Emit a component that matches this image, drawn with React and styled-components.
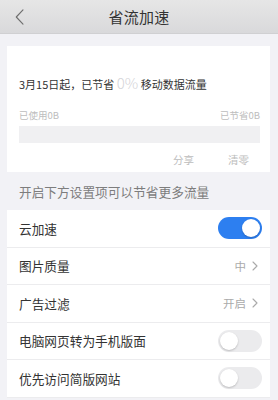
import React, { useState } from 'react';
import styled, { createGlobalStyle } from 'styled-components';

const GlobalStyle = createGlobalStyle`
    body {
        margin: 0;
        background: #f2f2f6;
        font-family: "Noto Sans CJK SC", "Noto Sans", sans-serif;
    }
`;

function Chevron({ color = '#aaa', size = 10, left }) {
    return (
        <svg width={size * 0.6} height={size} viewBox="0 0 6 10">
            <path
                d={left ? 'M5 0.5 L0.8 5 L5 9.5' : 'M1 1 L5 5 L1 9'}
                fill="none"
                stroke={color}
                strokeWidth={left ? 0.7 : 1.1}
                strokeLinecap="round"
                strokeLinejoin="round"
            />
        </svg>
    );
}

function App() {
    const [cloud, setCloud] = useState(true);
    const [mobile, setMobile] = useState(false);
    const [simple, setSimple] = useState(false);

    return (
        <Page>
            <GlobalStyle />
            <Header>
                <BackButton>
                    <Chevron left color="#6e6e6e" size={16} />
                </BackButton>
                <Title>省流加速</Title>
            </Header>

            <Card>
                <Summary>
                    3月15日起，已节省 <Percent>0%</Percent> 移动数据流量
                </Summary>
                <UsageLabels>
                    <span>已使用0B</span>
                    <span>已节省0B</span>
                </UsageLabels>
                <Bar />
                <Actions>
                    <Action>分享</Action>
                    <Action>清零</Action>
                </Actions>
            </Card>

            <SectionTitle>开启下方设置项可以节省更多流量</SectionTitle>

            <List>
                <Row>
                    <Label>云加速</Label>
                    <Toggle $on={cloud} onClick={() => setCloud(!cloud)} />
                </Row>
                <Row>
                    <Label>图片质量</Label>
                    <Value>中 <Chevron /></Value>
                </Row>
                <Row>
                    <Label>广告过滤</Label>
                    <Value>开启 <Chevron /></Value>
                </Row>
                <Row>
                    <Label>电脑网页转为手机版面</Label>
                    <Toggle $on={mobile} onClick={() => setMobile(!mobile)} />
                </Row>
                <Row>
                    <Label>优先访问简版网站</Label>
                    <Toggle $on={simple} onClick={() => setSimple(!simple)} />
                </Row>
            </List>
        </Page>
    );
}

const Page = styled.div`
    width: 278px;
    height: 400px;
    overflow: hidden;
    background: #f2f2f6;
`;

const Header = styled.div`
    height: 34px;
    display: flex;
    align-items: center;
    justify-content: center;
    position: relative;
    background: linear-gradient(#e6e6e6, #d9d9db);
    border-bottom: 1px solid #d0d0d2;
    box-sizing: border-box;
`;

const BackButton = styled.div`
    position: absolute;
    left: 15px;
    top: 9px;
    display: flex;
`;

const Title = styled.div`
    font-size: 15px;
    color: #333;
    letter-spacing: 0.3px;
`;

const Card = styled.div`
    margin: 12px 8px 0 7px;
    background: #fff;
    padding: 28px 10px 6px 12px;
    height: 126px;
    box-sizing: border-box;
`;

const Summary = styled.div`
    font-size: 11px;
    line-height: 18px;
    color: #333;
    white-space: nowrap;
`;

const Percent = styled.span`
    font-size: 15px;
    color: #d4d4d8;
    font-weight: 300;
`;

const UsageLabels = styled.div`
    margin-top: 15px;
    display: flex;
    justify-content: space-between;
    font-size: 9.5px;
    line-height: 14px;
    color: #bdbdbd;
`;

const Bar = styled.div`
    margin-top: 4px;
    height: 17px;
    background: #f0f0f2;
`;

const Actions = styled.div`
    margin-top: 10px;
    display: flex;
    justify-content: flex-end;
    gap: 34px;
    padding-right: 11px;
    font-size: 10.5px;
    line-height: 14px;
    color: #bcbcbc;
`;

const Action = styled.span``;

const SectionTitle = styled.div`
    margin: 11px 0 9px 19px;
    font-size: 12.7px;
    line-height: 18px;
    color: #7d7d7d;
`;

const List = styled.div`
    margin: 0 8px 0 7px;
    background: #fff;
`;

const Row = styled.div`
    height: 37.5px;
    display: flex;
    align-items: center;
    justify-content: space-between;
    padding: 0 8px 0 12px;
    box-sizing: border-box;
    border-bottom: 1px solid #ececee;
`;

const Label = styled.span`
    font-size: 12.7px;
    color: #333;
`;

const Value = styled.span`
    display: flex;
    align-items: center;
    gap: 6px;
    padding-right: 4px;
    font-size: 11.5px;
    color: #aaa;
`;

const Toggle = styled.div`
    width: 44px;
    height: 22px;
    border-radius: 11px;
    background: ${p => (p.$on ? '#2d7ff0' : '#ebebed')};
    position: relative;
    cursor: pointer;

    &::after {
        content: '';
        position: absolute;
        top: 2px;
        left: ${p => (p.$on ? '24px' : '2px')};
        width: 18px;
        height: 18px;
        border-radius: 50%;
        background: #fff;
        box-shadow: 0 1px 2px rgba(0, 0, 0, 0.2);
    }
`;

export default App;
